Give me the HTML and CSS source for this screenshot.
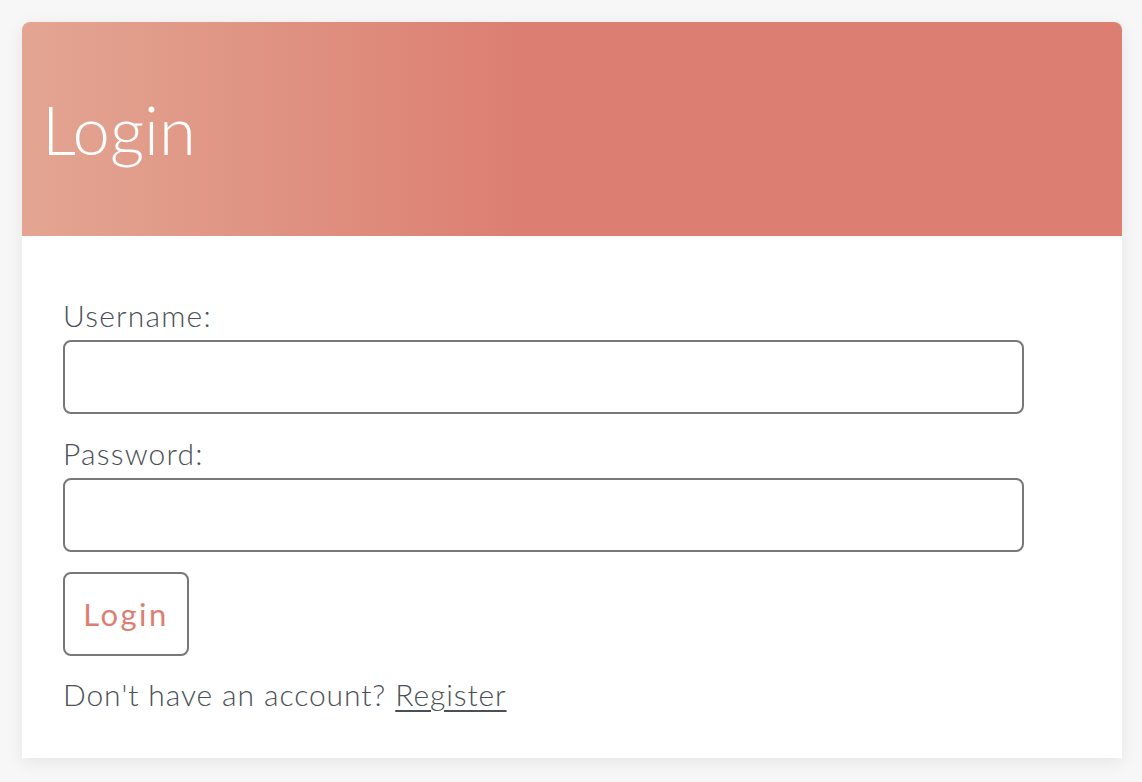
FILE: index.html
```html
<!DOCTYPE html>
<html>
<head>
<meta charset="utf-8">
<link rel="stylesheet" href="styles.css">
</head>
<body>
<div class="page">
  <div class="card">
    <div class="card-header">
      <h1 class="title">Login</h1>
    </div>
    <form class="card-body">
      <label class="label" for="u">Username:</label>
      <input class="field" id="u" type="text">
      <label class="label" for="p">Password:</label>
      <input class="field field-last" id="p" type="password">
      <button class="btn" type="button">Login</button>
      <p class="note">Don't have an account? <a class="link" href="#">Register</a></p>
    </form>
  </div>
</div>
</body>
</html>
```
FILE: styles.css
```css
html, body {
  margin: 0;
  padding: 0;
  background: #f7f7f7;
}
body {
  font-family: Lato, "Open Sans", sans-serif;
  color: #4b5056;
}
.page {
  padding: 22px 20px 24px 22px;
}
.card {
  width: 1100px;
  background: #fff;
  border-radius: 8px 8px 0 0;
  box-shadow: 0 4px 18px rgba(0,0,0,0.08);
}
.card-header {
  height: 214px;
  border-radius: 8px 8px 0 0;
  background: linear-gradient(90deg, #e3a592 0%, #e09584 20%, #dc7f72 45%, #dc7f72 100%);
  display: flex;
  align-items: center;
  padding-left: 20px;
}
.title {
  margin: 0;
  font-size: 67px;
  font-weight: 300;
  color: #fff;
}
.card-body {
  padding: 61px 40px 46px 41px;
  display: flex;
  flex-direction: column;
  align-items: flex-start;
}
.label {
  font-size: 30px;
  line-height: 36px;
  font-weight: 300;
  letter-spacing: 1.2px;
}
.field {
  box-sizing: border-box;
  width: 961px;
  height: 74px;
  border: 2px solid #777;
  border-radius: 8px;
  margin: 7px 0 21px;
  font-size: 24px;
  padding: 0 16px;
}
.field-last {
  margin-bottom: 20px;
}
.btn {
  box-sizing: border-box;
  width: 126px;
  height: 84px;
  padding: 0;
  border: 2px solid #777;
  border-radius: 8px;
  background: #fff;
  color: #dc7f72;
  font-family: Lato, sans-serif;
  font-size: 31px;
  letter-spacing: 2.5px;
}
.note {
  margin: 20px 0 0;
  font-size: 30px;
  line-height: 36px;
  font-weight: 300;
  letter-spacing: 0.9px;
}
.link {
  color: #4b5056;
  text-decoration-thickness: 2px;
  text-underline-offset: 4px;
}
```
